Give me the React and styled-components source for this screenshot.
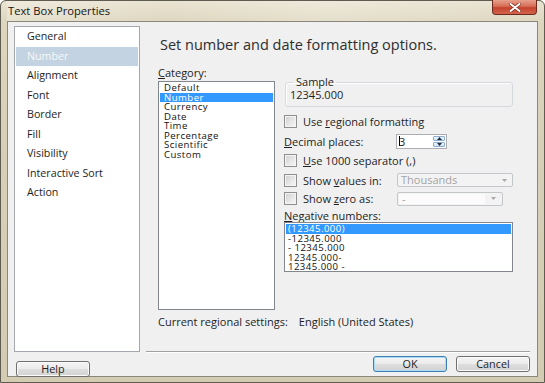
import React from "react";
import styled, { createGlobalStyle } from "styled-components";

const GlobalStyle = createGlobalStyle`
  html, body {
    margin: 0;
    padding: 0;
  }
  body {
    width: 545px;
    height: 383px;
    overflow: hidden;
    background: #ffffff;
    font-family: "Open Sans", "DejaVu Sans", sans-serif;
    color: #1e1e1e;
  }
  * {
    box-sizing: border-box;
  }
`;

const navItems = [
  "General",
  "Number",
  "Alignment",
  "Font",
  "Border",
  "Fill",
  "Visibility",
  "Interactive Sort",
  "Action",
];

const categories = [
  "Default",
  "Number",
  "Currency",
  "Date",
  "Time",
  "Percentage",
  "Scientific",
  "Custom",
];

const negatives = [
  "(12345.000)",
  "-12345.000",
  "- 12345.000",
  "12345.000-",
  "12345.000 -",
];

const Arrow = ({ up, color = "#1f2d3d" }) => (
  <svg width="5" height="3" viewBox="0 0 5 3">
    <path d={up ? "M0 3 L2.5 0 L5 3 Z" : "M0 0 L2.5 3 L5 0 Z"} fill={color} />
  </svg>
);

const CloseGlyph = () => (
  <svg width="12" height="9" viewBox="0 0 12 9">
    <path
      d="M1.5 1 L10.5 8 M10.5 1 L1.5 8"
      stroke="#7a2a1e"
      strokeWidth="3.4"
      strokeLinecap="round"
    />
    <path
      d="M1.5 1 L10.5 8 M10.5 1 L1.5 8"
      stroke="#ffffff"
      strokeWidth="2"
      strokeLinecap="round"
    />
  </svg>
);

const TextBoxProperties = () => {
  return (
    <Window>
      <TitleBar>
        <Title>Text Box Properties</Title>
        <CloseButton>
          <CloseGlyph />
        </CloseButton>
      </TitleBar>
      <Client>
        <NavList>
          {navItems.map((item) => (
            <NavItem key={item} $active={item === "Number"}>
              {item}
            </NavItem>
          ))}
        </NavList>

        <Pane>
          <Heading>Set number and date formatting options.</Heading>
          <Body>
            <div>
              <FieldLabel>
                <Mn>C</Mn>ategory:
              </FieldLabel>
              <ListBox $height={229} $pad={4}>
                {categories.map((c) => (
                  <ListItem key={c} $selected={c === "Number"}>
                    {c}
                  </ListItem>
                ))}
              </ListBox>
            </div>

            <RightColumn>
              <SampleGroup>
                <SampleLegend>Sample</SampleLegend>
                <SampleValue>12345.000</SampleValue>
              </SampleGroup>

              <Options>
                <OptionRow>
                  <CheckLabel>
                    <CheckBox />
                    <span>
                      Use <Mn>r</Mn>egional formatting
                    </span>
                  </CheckLabel>
                </OptionRow>
                <OptionRow>
                  <PlainLabel>
                    <Mn>D</Mn>ecimal places:
                  </PlainLabel>
                  <SpinBox>
                    <SpinText>
                      <Caret />3
                    </SpinText>
                    <SpinButtons>
                      <SpinButton>
                        <Arrow up />
                      </SpinButton>
                      <SpinButton>
                        <Arrow />
                      </SpinButton>
                    </SpinButtons>
                  </SpinBox>
                </OptionRow>
                <OptionRow>
                  <CheckLabel>
                    <CheckBox />
                    <span>
                      <Mn>U</Mn>se 1000 separator (,)
                    </span>
                  </CheckLabel>
                </OptionRow>
                <OptionRow>
                  <CheckLabel>
                    <CheckBox />
                    <span>
                      Show <Mn>v</Mn>alues in:
                    </span>
                  </CheckLabel>
                  <Combo $width={116}>
                    <ComboText>Thousands</ComboText>
                    <ComboArrow>
                      <Arrow color="#a8a8a8" />
                    </ComboArrow>
                  </Combo>
                </OptionRow>
                <OptionRow $height={17.5}>
                  <CheckLabel>
                    <CheckBox />
                    <span>
                      Show <Mn>z</Mn>ero as:
                    </span>
                  </CheckLabel>
                  <Combo $width={106} $editable>
                    <ComboText $editable>-</ComboText>
                    <ComboArrow>
                      <Arrow color="#a8a8a8" />
                    </ComboArrow>
                  </Combo>
                </OptionRow>
              </Options>

              <NegativeLabel>
                <Mn>N</Mn>egative numbers:
              </NegativeLabel>
              <ListBox $height={50} $pad={2}>
                {negatives.map((n, i) => (
                  <ListItem key={n} $selected={i === 0}>
                    {n}
                  </ListItem>
                ))}
              </ListBox>
            </RightColumn>
          </Body>

          <RegionalLine>
            <span>Current regional settings:</span>
            <span>English (United States)</span>
          </RegionalLine>
        </Pane>

        <HelpCell>
          <Button>Help</Button>
        </HelpCell>
        <ButtonBar>
          <Button $default>OK</Button>
          <Button>Cancel</Button>
        </ButtonBar>
      </Client>
    </Window>
  );
};

const Window = styled.div`
  width: 545px;
  height: 383px;
  display: flex;
  flex-direction: column;
  padding: 0 6px 5px 6px;
  border: 1px solid #5f5b50;
  border-radius: 6px 6px 0 0;
  background: linear-gradient(
    180deg,
    #e9e4d2 0%,
    #ddd5bd 6%,
    #d7cfb7 40%,
    #d3cbb2 100%
  );
`;

const TitleBar = styled.div`
  height: 20px;
  display: flex;
  align-items: flex-start;
  justify-content: space-between;
  padding: 0 1px;
  background: linear-gradient(
    90deg,
    rgba(255, 255, 255, 0.25) 0%,
    rgba(255, 255, 255, 0) 30%,
    rgba(255, 255, 255, 0.2) 60%,
    rgba(255, 255, 255, 0) 100%
  );
`;

const Title = styled.div`
  font-size: 11.2px;
  line-height: 20px;
  color: #161616;
`;

const CloseButton = styled.div`
  width: 45px;
  height: 15px;
  margin-top: -1px;
  display: flex;
  align-items: center;
  justify-content: center;
  border: 1px solid #6f2a20;
  border-top: none;
  border-radius: 0 0 4px 4px;
  background: linear-gradient(
    180deg,
    #e7a08d 0%,
    #d76d55 45%,
    #c5432c 55%,
    #d3644c 100%
  );
`;

const Client = styled.div`
  flex: 1;
  display: grid;
  grid-template-columns: 126px 1fr;
  grid-template-rows: 1fr 16px;
  column-gap: 6px;
  row-gap: 4px;
  padding: 4px 7px 4px 6px;
  background: #f0f0f0;
  border: 1px solid #8a877b;
`;

const NavList = styled.ul`
  list-style: none;
  margin: 0;
  padding: 0;
  background: #ffffff;
  border: 1px solid #a3a8b0;
`;

const NavItem = styled.li`
  height: 19.5px;
  line-height: 19.5px;
  margin: 0 1px;
  padding-left: 11px;
  font-size: 10.7px;
  color: ${(p) => (p.$active ? "#f6f8fa" : "#1e1e1e")};
  background: ${(p) => (p.$active ? "#c3d3e1" : "transparent")};
`;

const Pane = styled.div`
  display: flex;
  flex-direction: column;
  padding: 10px 0 0 12px;
  border-bottom: 1px solid #a0a0a0;
  box-shadow: 0 1px 0 #ffffff;
  font-size: 11px;
`;

const Heading = styled.div`
  padding-left: 2px;
  font-size: 14.5px;
  line-height: 18px;
  color: #2e2e2e;
`;

const Body = styled.div`
  display: grid;
  grid-template-columns: 117px 229px;
  column-gap: 9px;
  margin-top: 13px;
`;

const FieldLabel = styled.div`
  line-height: 12px;
  margin-bottom: 2px;
`;

const Mn = styled.span`
  text-decoration: underline;
  text-underline-offset: 1px;
`;

const ListBox = styled.ul`
  list-style: none;
  margin: 0;
  padding: 1px 0 0 0;
  height: ${(p) => p.$height}px;
  overflow: hidden;
  background: #ffffff;
  border: 1px solid #82868f;

  li {
    padding-left: ${(p) => p.$pad}px;
  }
`;

const ListItem = styled.li`
  height: 9.5px;
  line-height: 9.5px;
  margin: 0 1px;
  font-size: 9.6px;
  letter-spacing: 0.45px;
  white-space: nowrap;
  color: ${(p) => (p.$selected ? "#ffffff" : "#111111")};
  background: ${(p) => (p.$selected ? "#3399ff" : "transparent")};
`;

const RightColumn = styled.div`
  display: flex;
  flex-direction: column;
`;

const SampleGroup = styled.fieldset`
  margin: 9px 0 0 1px;
  padding: 0 4px 5px 4px;
  min-inline-size: 0;
  border: 1px solid #d5d9dd;
  border-radius: 3px;
  box-shadow: inset 1px 1px 0 #ffffff;
`;

const SampleLegend = styled.legend`
  margin-left: 4px;
  padding: 0 2px;
  line-height: 12px;
  color: #1e1e1e;
`;

const SampleValue = styled.div`
  margin-top: 1px;
  line-height: 12px;
`;

const Options = styled.div`
  display: flex;
  flex-direction: column;
  margin-top: 5px;
`;

const OptionRow = styled.div`
  height: ${(p) => p.$height || 19.5}px;
  display: grid;
  grid-template-columns: 112px 1fr;
  align-items: center;
`;

const CheckLabel = styled.label`
  display: flex;
  align-items: center;
  gap: 6px;
  white-space: nowrap;
`;

const PlainLabel = styled.span`
  white-space: nowrap;
`;

const CheckBox = styled.span`
  width: 13px;
  height: 13px;
  flex: none;
  border: 1px solid #8e8f8f;
  box-shadow: inset 0 0 0 1px #f4f4f4;
  background: linear-gradient(135deg, #cfcfcf 0%, #e9e9e9 60%, #f7f7f7 100%);
`;

const SpinBox = styled.div`
  width: 51px;
  height: 15px;
  display: flex;
  align-items: stretch;
  background: #ffffff;
  border: 1px solid #abadb3;
`;

const SpinText = styled.div`
  flex: 1;
  display: flex;
  align-items: center;
  padding-left: 2px;
`;

const Caret = styled.span`
  width: 1px;
  height: 10px;
  margin-right: -1px;
  background: #000000;
`;

const SpinButtons = styled.div`
  width: 14px;
  display: flex;
  flex-direction: column;
  padding: 1px;
  gap: 1px;
`;

const SpinButton = styled.div`
  flex: 1;
  display: flex;
  align-items: center;
  justify-content: center;
  border: 1px solid #8eafcf;
  border-radius: 1px;
  background: linear-gradient(180deg, #eef5fc 0%, #cfe2f4 100%);
`;

const Combo = styled.div`
  width: ${(p) => p.$width}px;
  height: 14px;
  margin-left: 1px;
  display: flex;
  align-items: stretch;
  padding: ${(p) => (p.$editable ? "1px" : "0")};
  border: 1px solid #c3c6ca;
  border-radius: 2px;
  background: #f3f3f3;
`;

const ComboText = styled.div`
  flex: 1;
  padding-left: 3px;
  line-height: ${(p) => (p.$editable ? "10px" : "12px")};
  color: #a3a3a3;
  background: ${(p) => (p.$editable ? "#fbfbfb" : "transparent")};
`;

const ComboArrow = styled.div`
  width: 16px;
  display: flex;
  align-items: center;
  justify-content: center;
`;

const NegativeLabel = styled.div`
  margin-top: 2.5px;
  line-height: 12px;
`;

const RegionalLine = styled.div`
  display: flex;
  gap: 11px;
  margin-top: 6px;
  line-height: 12px;
`;

const HelpCell = styled.div`
  padding-left: 2px;
`;

const ButtonBar = styled.div`
  display: flex;
  justify-content: flex-end;
  gap: 9px;
`;

const Button = styled.button`
  width: 74px;
  height: 16px;
  padding: 0;
  font-family: "Open Sans", "DejaVu Sans", sans-serif;
  font-size: 10.8px;
  line-height: 14px;
  color: #1e1e1e;
  border: 1px solid ${(p) => (p.$default ? "#3c7fb1" : "#707070")};
  border-radius: 3px;
  box-shadow: ${(p) =>
    p.$default ? "inset 0 0 0 1px #a9dcf6" : "inset 0 0 0 1px #fbfbfb"};
  background: linear-gradient(
    180deg,
    #f4f4f4 0%,
    #ececec 50%,
    #dedede 51%,
    #d2d2d2 100%
  );
`;

const App = () => (
  <>
    <GlobalStyle />
    <TextBoxProperties />
  </>
);

export default App;
